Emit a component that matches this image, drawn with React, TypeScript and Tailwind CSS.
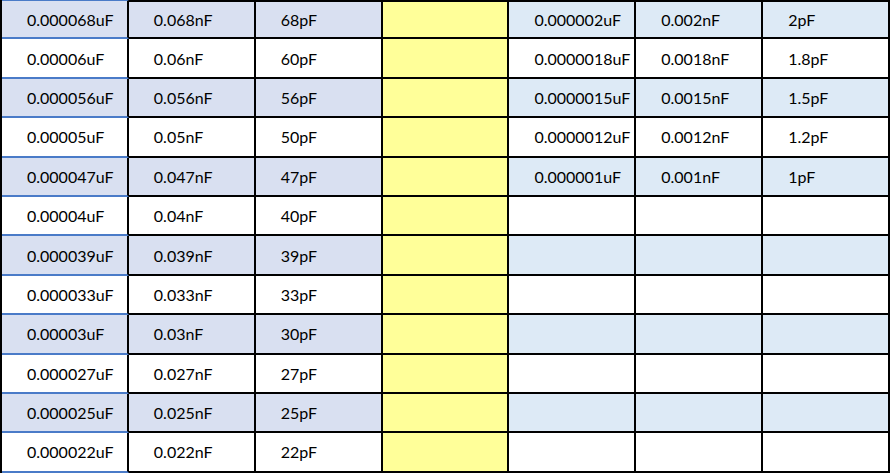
const leftRows = [
  ['0.000068uF', '0.068nF', '68pF'],
  ['0.00006uF', '0.06nF', '60pF'],
  ['0.000056uF', '0.056nF', '56pF'],
  ['0.00005uF', '0.05nF', '50pF'],
  ['0.000047uF', '0.047nF', '47pF'],
  ['0.00004uF', '0.04nF', '40pF'],
  ['0.000039uF', '0.039nF', '39pF'],
  ['0.000033uF', '0.033nF', '33pF'],
  ['0.00003uF', '0.03nF', '30pF'],
  ['0.000027uF', '0.027nF', '27pF'],
  ['0.000025uF', '0.025nF', '25pF'],
  ['0.000022uF', '0.022nF', '22pF'],
]

const rightRows = [
  ['0.000002uF', '0.002nF', '2pF'],
  ['0.0000018uF', '0.0018nF', '1.8pF'],
  ['0.0000015uF', '0.0015nF', '1.5pF'],
  ['0.0000012uF', '0.0012nF', '1.2pF'],
  ['0.000001uF', '0.001nF', '1pF'],
]

function Cell({ text, className }: { text?: string; className: string }) {
  return (
    <div className={'flex items-center pl-[25px] pt-[1px] border-r-2 border-black ' + className}>
      {text}
    </div>
  )
}

export default function App() {
  return (
    <div className="w-[890px] h-[475px] overflow-hidden bg-white text-black text-[16px] font-['Lato',sans-serif]">
      <div className="border-l-2 border-black">
        {leftRows.map((row, i) => {
          const shaded = i % 2 === 0
          const right = rightRows[i] || ['', '', '']
          const top = i === 0
          return (
            <div key={i} className="grid grid-cols-7 h-[39.4px]">
              <Cell
                text={row[0]}
                className={
                  'border-b-2 border-b-[#4a7bc8] ' +
                  (top ? 'border-t border-t-[#4a7bc8] ' : '') +
                  (shaded ? 'bg-[#d9e0f1]' : 'bg-white')
                }
              />
              <Cell
                text={row[1]}
                className={'border-b-2 ' + (top ? 'border-t-2 ' : '') + (shaded ? 'bg-[#d9e0f1]' : 'bg-white')}
              />
              <Cell
                text={row[2]}
                className={'border-b-2 ' + (top ? 'border-t-2 ' : '') + (shaded ? 'bg-[#d9e0f1]' : 'bg-white')}
              />
              <Cell className={'border-b-2 bg-[#ffff99] ' + (top ? 'border-t-2' : '')} />
              {right.map((t, j) => (
                <Cell
                  key={j}
                  text={t}
                  className={'border-b-2 ' + (top ? 'border-t-2 ' : '') + (shaded ? 'bg-[#ddeaf6]' : 'bg-white')}
                />
              ))}
            </div>
          )
        })}
      </div>
    </div>
  )
}
